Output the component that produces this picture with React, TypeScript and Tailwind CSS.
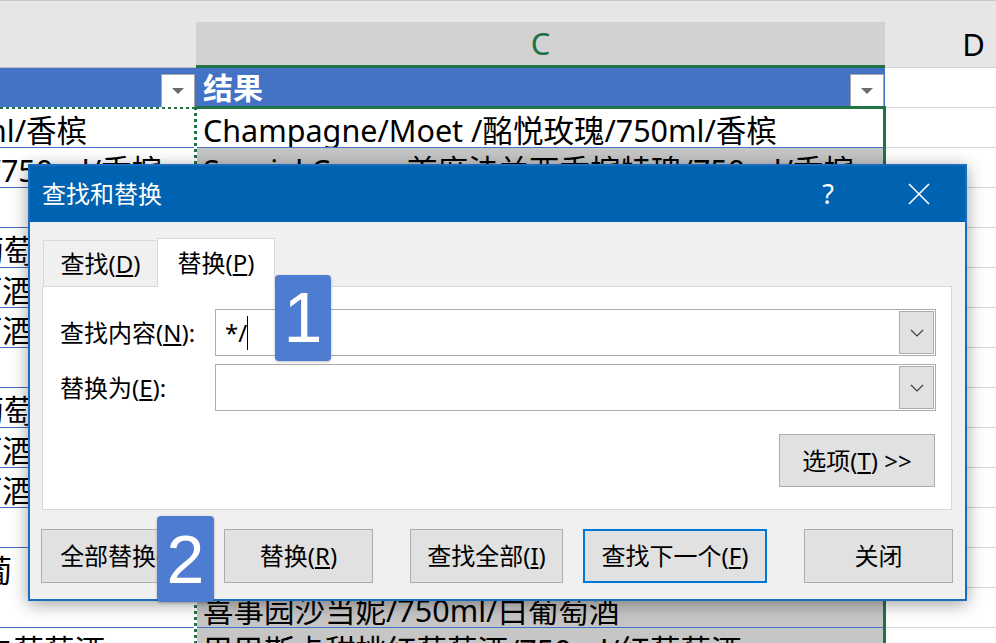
import React from "react";

type Row = { b: string; bEnd: number; c: string; active?: boolean; noLine?: boolean };

const rows: Row[] = [
  { b: "750ml/香槟", bEnd: 87, c: "Champagne/Moet /酩悦玫瑰/750ml/香槟", active: true },
  { b: "特瑰/750ml/香槟", bEnd: 162, c: "Special Cuvee 首席法兰西香槟特瑰/750ml/香槟" },
  { b: "", bEnd: 0, c: "Brut Imperial 酩悦皇室香槟/750ml/香槟" },
  { b: "红葡萄酒", bEnd: 65, c: "拉菲传奇波尔多/750ml/红葡萄酒" },
  { b: "白葡萄酒", bEnd: 33, c: "黄尾袋鼠/750ml/白葡萄酒" },
  { b: "红葡萄酒", bEnd: 33, c: "奔富洛神山庄/750ml/红葡萄酒" },
  { b: "", bEnd: 0, c: "" },
  { b: "白葡萄酒", bEnd: 65, c: "张裕解百纳/750ml/红葡萄酒" },
  { b: "红葡萄酒", bEnd: 33, c: "长城干红/750ml/红葡萄酒" },
  { b: "白葡萄酒", bEnd: 33, c: "干露红魔鬼/750ml/红葡萄酒" },
  { b: "", bEnd: 0, c: "" },
  { b: "甜白葡", bEnd: 12, c: "蒙特斯经典/750ml/白葡萄酒", noLine: true },
  { b: "", bEnd: 0, c: "喜事园沙当妮/750ml/白葡萄酒" },
  { b: "白葡萄酒", bEnd: 105, c: "巴巴斯卡甜桃红葡萄酒/750ml/红葡萄酒" },
];

function Drop() {
  return (
    <div className="w-[34px] h-[34px] bg-white border border-[#a6a6a6] flex items-center justify-center shrink-0">
      <div className="w-0 h-0 border-l-[6px] border-r-[6px] border-t-[6px] border-l-transparent border-r-transparent border-t-[#6b6b6b]" />
    </div>
  );
}

function Chevron() {
  return (
    <svg width="14" height="8" viewBox="0 0 14 8">
      <path d="M1 1 L7 7 L13 1" fill="none" stroke="#404040" strokeWidth="1.2" />
    </svg>
  );
}

function Btn({ children, w, focused }: { children: React.ReactNode; w: string; focused?: boolean }) {
  return (
    <div
      className={`${w} h-full bg-[#e1e1e1] flex items-center justify-center text-[24px] whitespace-nowrap ${
        focused ? "border-2 border-[#0078d7]" : "border border-[#adadad]"
      }`}
    >
      {children}
    </div>
  );
}

function Dialog() {
  return (
    <div className="absolute left-[28px] top-[164px] w-[939px] h-[437px] bg-[#f0f0f0] border-2 border-[#1a6cbc] shadow-[0_3px_16px_rgba(0,0,0,0.38)] flex flex-col">
      <div className="h-[56px] bg-[#0063b1] flex items-center text-white shrink-0">
        <span className="pl-[12px] text-[24px]">查找和替换</span>
        <div className="ml-auto w-[70px] flex justify-center text-[27px]">?</div>
        <div className="ml-[10px] w-[92px] flex justify-center">
          <svg width="22" height="22" viewBox="0 0 22 22">
            <path d="M1 1 L21 21 M21 1 L1 21" stroke="#ffffff" strokeWidth="1.6" />
          </svg>
        </div>
      </div>
      <div className="flex flex-col px-[12px]">
        <div className="flex items-end h-[48px] mt-[16px] pl-[1px] relative z-10">
          <div className="w-[114px] h-[46px] border-t border-l border-[#d9d9d9] flex items-center justify-center text-[24px]">
            查找(<u>D</u>)
          </div>
          <div className="w-[118px] h-[49px] -mb-[1px] bg-white border border-b-0 border-[#d9d9d9] flex items-center justify-center text-[24px]">
            替换(<u>P</u>)
          </div>
        </div>
        <div className="h-[224px] mr-[1px] bg-white border border-[#d9d9d9] pt-[22px] pl-[17px] pr-[15px] flex flex-col">
          <div className="flex items-center h-[47px]">
            <div className="w-[155px] text-[24px] whitespace-nowrap">
              查找内容(<u>N</u>):
            </div>
            <div className="flex-1 h-full border border-[#adadad] bg-white flex items-center">
              <span className="pl-[9px] text-[24px]">*/</span>
              <div className="w-px h-[34px] bg-black" />
              <div className="ml-auto mr-px w-[35px] h-[43px] bg-[#e1e1e1] border border-[#adadad] flex items-center justify-center">
                <Chevron />
              </div>
            </div>
          </div>
          <div className="flex items-center h-[47px] mt-[8px]">
            <div className="w-[155px] text-[24px] whitespace-nowrap">
              替换为(<u>E</u>):
            </div>
            <div className="flex-1 h-full border border-[#adadad] bg-white flex items-center">
              <div className="ml-auto mr-px w-[35px] h-[43px] bg-[#e1e1e1] border border-[#adadad] flex items-center justify-center">
                <Chevron />
              </div>
            </div>
          </div>
          <div className="self-end mt-[23px] mr-px w-[156px] h-[53px] bg-[#e1e1e1] border border-[#adadad] flex items-center justify-center text-[24px] whitespace-nowrap">
            选项(<u>T</u>)&nbsp;&gt;&gt;
          </div>
        </div>
      </div>
      <div className="flex mt-[19px] pl-[11px] h-[54px]">
        <Btn w="w-[164px]">
          全部替换(<u>A</u>)
        </Btn>
        <div className="w-[19px]" />
        <Btn w="w-[149px]">
          替换(<u>R</u>)
        </Btn>
        <div className="w-[37px]" />
        <Btn w="w-[153px]">
          查找全部(<u>I</u>)
        </Btn>
        <div className="w-[20px]" />
        <Btn w="w-[184px]" focused>
          查找下一个(<u>F</u>)
        </Btn>
        <div className="w-[37px]" />
        <Btn w="w-[149px]">关闭</Btn>
      </div>
    </div>
  );
}

export default function App() {
  return (
    <div className="relative w-[996px] h-[643px] overflow-hidden bg-white text-black font-['Noto_Sans','Noto_Sans_CJK_SC',sans-serif]">
      <div className="h-[22px] bg-[#e6e6e6] border-t border-[#c8c8c8]" />
      <div className="flex h-[46px]">
        <div className="w-[196px] bg-[#e6e6e6] border-b border-[#c0c0c0]" />
        <div className="w-[689px] bg-[#d2d2d2] border-b-[3px] border-[#217346] flex items-center justify-center text-[31px] text-[#217346] leading-none">
          C
        </div>
        <div className="flex-1 bg-[#e6e6e6] border-b border-[#d4d4d4] flex items-center justify-end pr-[11px] text-[31px] leading-none">
          D
        </div>
      </div>
      <div className="flex h-[40px]">
        <div className="w-[196px] bg-[#4472c4] flex items-end justify-end pr-px">
          <Drop />
        </div>
        <div className="w-[689px] bg-[#4472c4] flex items-end pl-[7px] pr-px">
          <span className="self-center text-white font-bold text-[30px] leading-[42px]">结果</span>
          <div className="ml-auto">
            <Drop />
          </div>
        </div>
        <div className="flex-1 border-b border-[#d4d4d4]" />
      </div>
      {rows.map((r, i) => (
        <div key={i} className="flex h-[40px]">
          <div
            className={`w-[196px] overflow-hidden flex justify-end whitespace-nowrap text-[30.5px] leading-[45px] ${
              r.noLine ? "" : "border-b border-[#4472c4]"
            }`}
            style={{ paddingRight: 196 - r.bEnd }}
          >
            <span className="shrink-0">{r.b}</span>
          </div>
          <div
            className={`w-[689px] overflow-hidden whitespace-nowrap pl-[7px] text-[30.5px] leading-[45px] border-b border-[#4472c4] ${
              r.active ? "bg-white" : "bg-[#c6c6c6]"
            }`}
          >
            {r.c}
          </div>
          <div className="flex-1 border-b border-[#d4d4d4]" />
        </div>
      ))}

      {/* selection border */}
      <div className="absolute left-[196px] top-[106px] w-[690px] h-[600px] border-t-[3px] border-r-[3px] border-[#217346]" />
      {/* copy marquee */}
      <div className="absolute left-0 top-[107px] w-[197px] h-[2px] bg-[repeating-linear-gradient(90deg,#217346_0_3px,#ffffff_3px_6px)]" />
      <div className="absolute left-[194px] top-[107px] w-[3px] h-[560px] bg-[repeating-linear-gradient(180deg,#217346_0_3px,#ffffff_3px_6px)]" />

      <Dialog />

      <div className="absolute left-[275px] top-[275px] w-[56px] h-[86px] rounded-[4px] bg-[#4e7cd1] flex items-center justify-center text-white text-[70px] leading-none font-['Liberation_Sans',sans-serif] shadow-[0_1px_3px_rgba(0,0,0,0.25)]">
        1
      </div>
      <div className="absolute left-[157px] top-[516px] w-[57px] h-[86px] rounded-[4px] bg-[#4e7cd1] flex items-center justify-center text-white text-[68px] leading-none font-['Liberation_Sans',sans-serif] shadow-[0_1px_3px_rgba(0,0,0,0.25)]">
        2
      </div>
    </div>
  );
}
